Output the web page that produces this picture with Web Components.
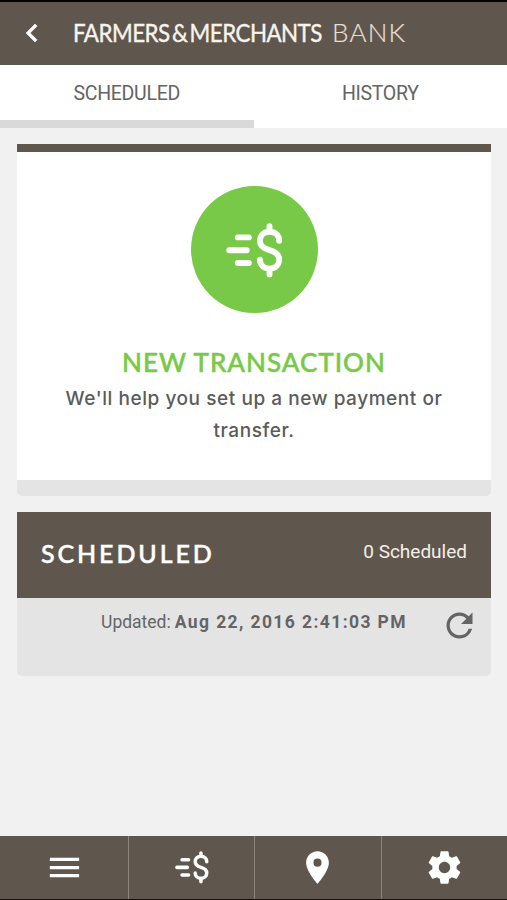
<!DOCTYPE html>
<html lang="en">
<head>
<meta charset="utf-8">
<title>Farmers &amp; Merchants Bank</title>
<style>
  body {
    margin: 0;
    background: #f1f1f1;
    font-family: Roboto, "Liberation Sans", sans-serif;
    color: #646464;
    --brand: #5f574d;
    --green: #78c947;
  }
</style>
</head>
<body>
<bank-app></bank-app>

<script>
const icons = {
  back: ["0 0 24 24", '<path stroke="currentColor" stroke-width=".4" d="M15.41 7.41 14 6l-6 6 6 6 1.41-1.41L10.83 12z"/>'],
  menu: ["0 0 24 24", '<path d="M3 18h18v-2H3v2zm0-5h18v-2H3v2zm0-7v2h18V6H3z"/>'],
  place: ["0 0 24 24", '<path d="M12 2C8.13 2 5 5.13 5 9c0 5.25 7 13 7 13s7-7.75 7-13c0-3.87-3.13-7-7-7zm0 9.5a2.5 2.5 0 0 1 0-5 2.5 2.5 0 0 1 0 5z"/>'],
  settings: ["0 0 24 24", '<path d="M19.43 12.98c.04-.32.07-.64.07-.98s-.03-.66-.07-.98l2.11-1.65c.19-.15.24-.42.12-.64l-2-3.46c-.12-.22-.39-.3-.61-.22l-2.49 1c-.52-.4-1.08-.73-1.69-.98l-.38-2.65C14.46 2.18 14.25 2 14 2h-4c-.25 0-.46.18-.49.42l-.38 2.65c-.61.25-1.17.59-1.69.98l-2.49-1c-.23-.09-.49 0-.61.22l-2 3.46c-.13.22-.07.49.12.64l2.11 1.65c-.04.32-.07.65-.07.98s.03.66.07.98l-2.11 1.65c-.19.15-.24.42-.12.64l2 3.46c.12.22.39.3.61.22l2.49-1c.52.4 1.08.73 1.69.98l.38 2.65c.03.24.24.42.49.42h4c.25 0 .46-.18.49-.42l.38-2.65c.61-.25 1.17-.59 1.69-.98l2.49 1c.23.09.49 0 .61-.22l2-3.46c.12-.22.07-.49-.12-.64l-2.11-1.65zM12 15.5c-1.93 0-3.5-1.57-3.5-3.5s1.57-3.5 3.5-3.5 3.5 1.57 3.5 3.5-1.57 3.5-3.5 3.5z"/>'],
  refresh: ["0 0 24 24", '<path d="M17.65 6.35A7.958 7.958 0 0 0 12 4c-4.42 0-7.99 3.58-7.99 8s3.57 8 7.99 8c3.73 0 6.84-2.55 7.73-6h-2.08A5.99 5.99 0 0 1 12 18c-3.31 0-6-2.69-6-6s2.69-6 6-6c1.66 0 3.14.69 4.22 1.78L13 11h7V4l-2.35 2.35z"/>'],
  // dollar sign with three speed lines
  pay: ["46 43 57 55", '<g fill="none" stroke="currentColor" stroke-width="5.9" stroke-linecap="round"><path d="M57.8 57.4h11M49.2 70.3h17.6M57.8 83h11"/><path d="M99.2 60.8C99.2 55.4 95 51.8 89.5 51.8S79.9 55.5 79.9 60.8C79.9 66.8 84.5 68.8 89.5 70.2S99.2 73.6 99.2 79.6C99.2 85 95 88.6 89.5 88.6S79.9 85 79.9 79.6M89.5 46.2v5M89.5 89.2v5.2"/></g>']
};

class BankIcon extends HTMLElement {
  constructor() {
    super();
    this.attachShadow({ mode: "open" });
  }

  connectedCallback() {
    const [viewBox, shape] = icons[this.getAttribute("name")];
    this.shadowRoot.innerHTML = `
      <style>
        :host { display: block; flex: none; width: 39px; height: 39px; }
        svg { display: block; width: 100%; height: 100%; fill: currentColor; }
      </style>
      <svg viewBox="${viewBox}" aria-hidden="true">${shape}</svg>`;
  }
}
customElements.define("bank-icon", BankIcon);

// Registers an element whose shadow root is a clone of the given markup
function defineElement(name, html) {
  const template = document.createElement("template");
  template.innerHTML = html;
  customElements.define(name, class extends HTMLElement {
    constructor() {
      super();
      this.attachShadow({ mode: "open" });
      this.shadowRoot.appendChild(template.content.cloneNode(true));
    }
  });
}

defineElement("bank-header", `
  <style>
    :host {
      display: flex;
      align-items: center;
      box-sizing: border-box;
      height: 65px;
      padding: 0 0 1px 14px;
      border-top: 2px solid #050403;
      background: var(--brand);
      color: #fff;
    }
    bank-icon { width: 36px; height: 36px; }
    .name {
      display: flex;
      margin: -2px 0 0 23px;
      font: 400 25px/36px Lato, sans-serif;
      color: #f8f3ec;
      white-space: pre;
    }
    /* condensed to get the narrow caps of the wordmark */
    .main {
      width: 259px;
      letter-spacing: -0.6px;
      -webkit-text-stroke: 0.4px;
      transform: scaleX(0.895);
      transform-origin: left;
    }
    .sub { font-weight: 300; font-size: 26px; letter-spacing: 1.2px; color: #e6dfd6; -webkit-text-stroke: 0.2px; }
  </style>
  <bank-icon name="back"></bank-icon>
  <div class="name"><span class="main"><slot></slot></span><span class="sub"><slot name="sub"></slot></span></div>
`);

defineElement("bank-tab", `
  <style>
    :host {
      display: block;
      flex: 1;
      box-sizing: border-box;
      height: 63px;
      border-bottom: 8px solid transparent;
      text-align: center;
      font-size: 19.5px;
      line-height: 57px;
      letter-spacing: -0.3px;
    }
    :host([active]) { border-bottom-color: #d9d9d9; }
  </style>
  <slot></slot>
`);

defineElement("bank-card", `
  <style>
    :host {
      display: flex;
      flex-direction: column;
      background: #e4e4e4;
      border-radius: 0 0 5px 5px;
    }
  </style>
  <slot></slot>
`);

defineElement("new-transaction", `
  <style>
    :host {
      display: flex;
      flex-direction: column;
      align-items: center;
      box-sizing: border-box;
      height: 336px;
      padding-top: 34px;
      border-top: 8px solid var(--brand);
      background: #fff;
      text-align: center;
      font-family: Inter, sans-serif;
    }
    .circle {
      display: flex;
      align-items: center;
      justify-content: center;
      width: 127px;
      height: 127px;
      border-radius: 50%;
      background: var(--green);
      color: #fff;
    }
    bank-icon { width: 57px; height: 55px; margin-top: 1px; }
    h2 {
      margin: 32px 0 0;
      font: 500 26px/34px Lato, sans-serif;
      letter-spacing: 1px;
      -webkit-text-stroke: 0.5px;
      color: var(--green);
      white-space: nowrap;
    }
    p {
      width: 400px;
      margin: 4px 0 0;
      font-size: 19px;
      font-weight: 500;
      line-height: 31.5px;
      letter-spacing: 0.56px;
      color: #5b5b5b;
    }
  </style>
  <div class="circle"><bank-icon name="pay"></bank-icon></div>
  <h2><slot name="title"></slot></h2>
  <p><slot></slot></p>
`);

defineElement("scheduled-summary", `
  <style>
    :host { display: block; height: 164px; }
    header {
      display: flex;
      align-items: center;
      justify-content: space-between;
      box-sizing: border-box;
      height: 86px;
      padding: 0 24px;
      background: var(--brand);
      color: #f4efe8;
    }
    h3 {
      margin: -4px 0 0;
      font: 500 25px/30px Lato, sans-serif;
      letter-spacing: 2.9px;
      -webkit-text-stroke: 0.5px;
      color: #fff;
    }
    .count { margin-top: -7px; font-size: 19px; }
    .updated {
      display: flex;
      justify-content: flex-end;
      padding: 8px 12px 0 0;
      font-size: 17.5px;
      line-height: 32px;
    }
    b { letter-spacing: 1.4px; margin-left: 4px; }
    bank-icon { margin-left: 33px; }
  </style>
  <header><h3><slot name="title"></slot></h3><span class="count"><slot name="count"></slot></span></header>
  <div class="updated"><span>Updated:</span><b><slot></slot></b><bank-icon name="refresh"></bank-icon></div>
`);

defineElement("bank-nav", `
  <style>
    :host {
      display: flex;
      box-sizing: border-box;
      height: 64px;
      border-bottom: 1px solid #16110d;
      background: var(--brand);
      color: #fff;
    }
    div {
      display: flex;
      flex: 1;
      align-items: center;
      justify-content: center;
      padding-bottom: 1px;
    }
    div:first-of-type { flex: 0 0 128px; }
    div + div { border-left: 1px solid #8b847b; }
    .pay { width: 34px; height: 33px; }
  </style>
  <div><bank-icon name="menu"></bank-icon></div>
  <div><bank-icon class="pay" name="pay"></bank-icon></div>
  <div><bank-icon name="place"></bank-icon></div>
  <div><bank-icon name="settings"></bank-icon></div>
`);

defineElement("bank-app", `
  <style>
    :host {
      display: flex;
      flex-direction: column;
      height: 900px;
      overflow: hidden;
    }
    .tabs { display: flex; background: #fff; }
    main {
      display: flex;
      flex: 1;
      flex-direction: column;
      gap: 16px;
      padding: 16px 16px 0 17px;
    }
    .intro { height: 352px; }
  </style>
  <bank-header>FARMERS&#8201;&amp;&#8201;MERCHANTS<span slot="sub">BANK</span></bank-header>
  <div class="tabs">
    <bank-tab active>SCHEDULED</bank-tab>
    <bank-tab>HISTORY</bank-tab>
  </div>
  <main>
    <bank-card class="intro">
      <new-transaction>
        <span slot="title">NEW TRANSACTION</span>
        We'll help you set up a new payment or transfer.
      </new-transaction>
    </bank-card>
    <bank-card>
      <scheduled-summary>
        <span slot="title">SCHEDULED</span>
        <span slot="count">0 Scheduled</span>
        Aug 22, 2016 2:41:03 PM
      </scheduled-summary>
    </bank-card>
  </main>
  <bank-nav></bank-nav>
`);
</script>
</body>
</html>
